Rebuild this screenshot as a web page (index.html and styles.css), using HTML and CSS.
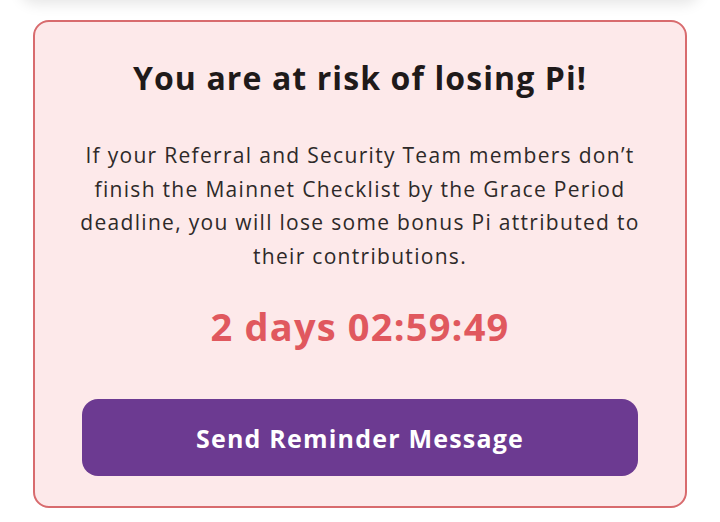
FILE: index.html
```html
<!DOCTYPE html>
<html>
<head>
<meta charset="utf-8">
<link rel="stylesheet" href="styles.css">
</head>
<body>
<div class="prev-card"></div>
<div class="risk-card">
  <h1 class="risk-title">You are at risk of losing Pi!</h1>
  <p class="risk-text">If your Referral and Security Team members don’t finish the Mainnet Checklist by the Grace Period deadline, you will lose some bonus Pi attributed to their contributions.</p>
  <div class="risk-timer">2 days 02:59:49</div>
  <button class="risk-button">Send Reminder Message</button>
</div>
</body>
</html>
```
FILE: styles.css
```css
html, body {
  margin: 0;
  padding: 0;
  background: #ffffff;
  width: 720px;
  height: 522px;
  overflow: hidden;
  font-family: "Open Sans", sans-serif;
}
.prev-card {
  height: 40px;
  margin: -40px 20px 0;
  background: #fff;
  border-radius: 16px;
  box-shadow: 0 4px 14px rgba(0, 0, 0, 0.10);
}
.risk-card {
  box-sizing: border-box;
  margin: 20px 33px 0;
  height: 488px;
  background: #fde9ea;
  border: 2px solid #d86b6e;
  border-radius: 16px;
  padding: 36px 40px 0;
  display: flex;
  flex-direction: column;
  align-items: center;
  text-align: center;
}
.risk-title {
  margin: 0;
  font-size: 32px;
  font-weight: 700;
  letter-spacing: 1.1px;
  color: #1f1a1a;
  line-height: 40px;
}
.risk-text {
  margin: 41px 0 0;
  max-width: 560px;
  font-size: 21px;
  letter-spacing: 1.3px;
  line-height: 33.5px;
  color: #2e2929;
}
.risk-timer {
  margin-top: 30px;
  font-size: 38px;
  font-weight: 700;
  letter-spacing: 1.2px;
  color: #e0585e;
  line-height: 46px;
}
.risk-button {
  margin-top: 50px;
  width: 556px;
  height: 77px;
  border: none;
  border-radius: 16px;
  background: #6c3a91;
  color: #fff;
  font-family: inherit;
  font-size: 25px;
  font-weight: 700;
  letter-spacing: 1.2px;
}
```
